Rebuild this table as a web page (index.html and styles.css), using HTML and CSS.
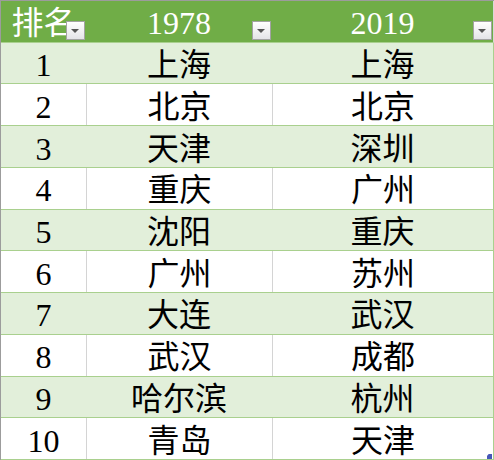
FILE: index.html
```html
<!DOCTYPE html>
<html lang="zh-CN">
<head>
<meta charset="utf-8">
<title>城市排名</title>
<link rel="stylesheet" href="styles.css">
</head>
<body>
<div class="sheet">
  <div class="row head">
    <div class="cell">排名<span class="filter"></span></div>
    <div class="cell">1978<span class="filter"></span></div>
    <div class="cell">2019<span class="filter"></span></div>
  </div>
  <div class="row band"><div class="cell">1</div><div class="cell">上海</div><div class="cell">上海</div></div>
  <div class="row plain"><div class="cell">2</div><div class="cell">北京</div><div class="cell">北京</div></div>
  <div class="row band"><div class="cell">3</div><div class="cell">天津</div><div class="cell">深圳</div></div>
  <div class="row plain"><div class="cell">4</div><div class="cell">重庆</div><div class="cell">广州</div></div>
  <div class="row band"><div class="cell">5</div><div class="cell">沈阳</div><div class="cell">重庆</div></div>
  <div class="row plain"><div class="cell">6</div><div class="cell">广州</div><div class="cell">苏州</div></div>
  <div class="row band"><div class="cell">7</div><div class="cell">大连</div><div class="cell">武汉</div></div>
  <div class="row plain"><div class="cell">8</div><div class="cell">武汉</div><div class="cell">成都</div></div>
  <div class="row band"><div class="cell">9</div><div class="cell">哈尔滨</div><div class="cell">杭州</div></div>
  <div class="row plain"><div class="cell">10</div><div class="cell">青岛</div><div class="cell">天津</div></div>
  <span class="handle"></span>
</div>
</body>
</html>
```
FILE: styles.css
```css
html, body {
  margin: 0;
  padding: 0;
  background: #ffffff;
}

.sheet {
  position: relative;
  width: 494px;
  height: 460px;
  box-sizing: border-box;
  border-top: 1px solid #9c9c9c;
  border-left: 1px solid #9c9c9c;
  display: grid;
  grid-template-rows: repeat(11, 1fr);
  font-family: "Liberation Serif", "Noto Sans CJK SC", serif;
  font-size: 32px;
  color: #000000;
}

.row {
  display: grid;
  grid-template-columns: 85px 186px 1fr;
  border-bottom: 1px solid #a9d08e;
  border-right: 1px solid #a9d08e;
  min-height: 0;
}

.head {
  background: #70ad47;
  color: #ffffff;
  border-right-color: #d8d8d8;
}

.band {
  background: #e2efda;
}

.plain {
  background: #ffffff;
}

.plain .cell + .cell {
  border-left: 1px solid #d4d4d4;
}

.cell {
  position: relative;
  display: flex;
  align-items: center;
  justify-content: center;
  line-height: 1;
  padding-top: 4px;
  white-space: nowrap;
  min-height: 0;
}

.filter {
  position: absolute;
  right: 1px;
  bottom: 2px;
  width: 19px;
  height: 19px;
  box-sizing: border-box;
  border: 1px solid #a3a3a3;
  background: linear-gradient(#ffffff, #e4e4e8);
}

.filter::after {
  content: "";
  position: absolute;
  left: 4px;
  top: 7px;
  width: 0;
  height: 0;
  border-left: 4px solid transparent;
  border-right: 4px solid transparent;
  border-top: 4px solid #555555;
}

.handle {
  position: absolute;
  right: 2px;
  bottom: 1px;
  width: 5px;
  height: 5px;
  background: #4658b8;
  clip-path: polygon(0 35%, 35% 0, 100% 0, 100% 100%, 0 100%);
}
```
